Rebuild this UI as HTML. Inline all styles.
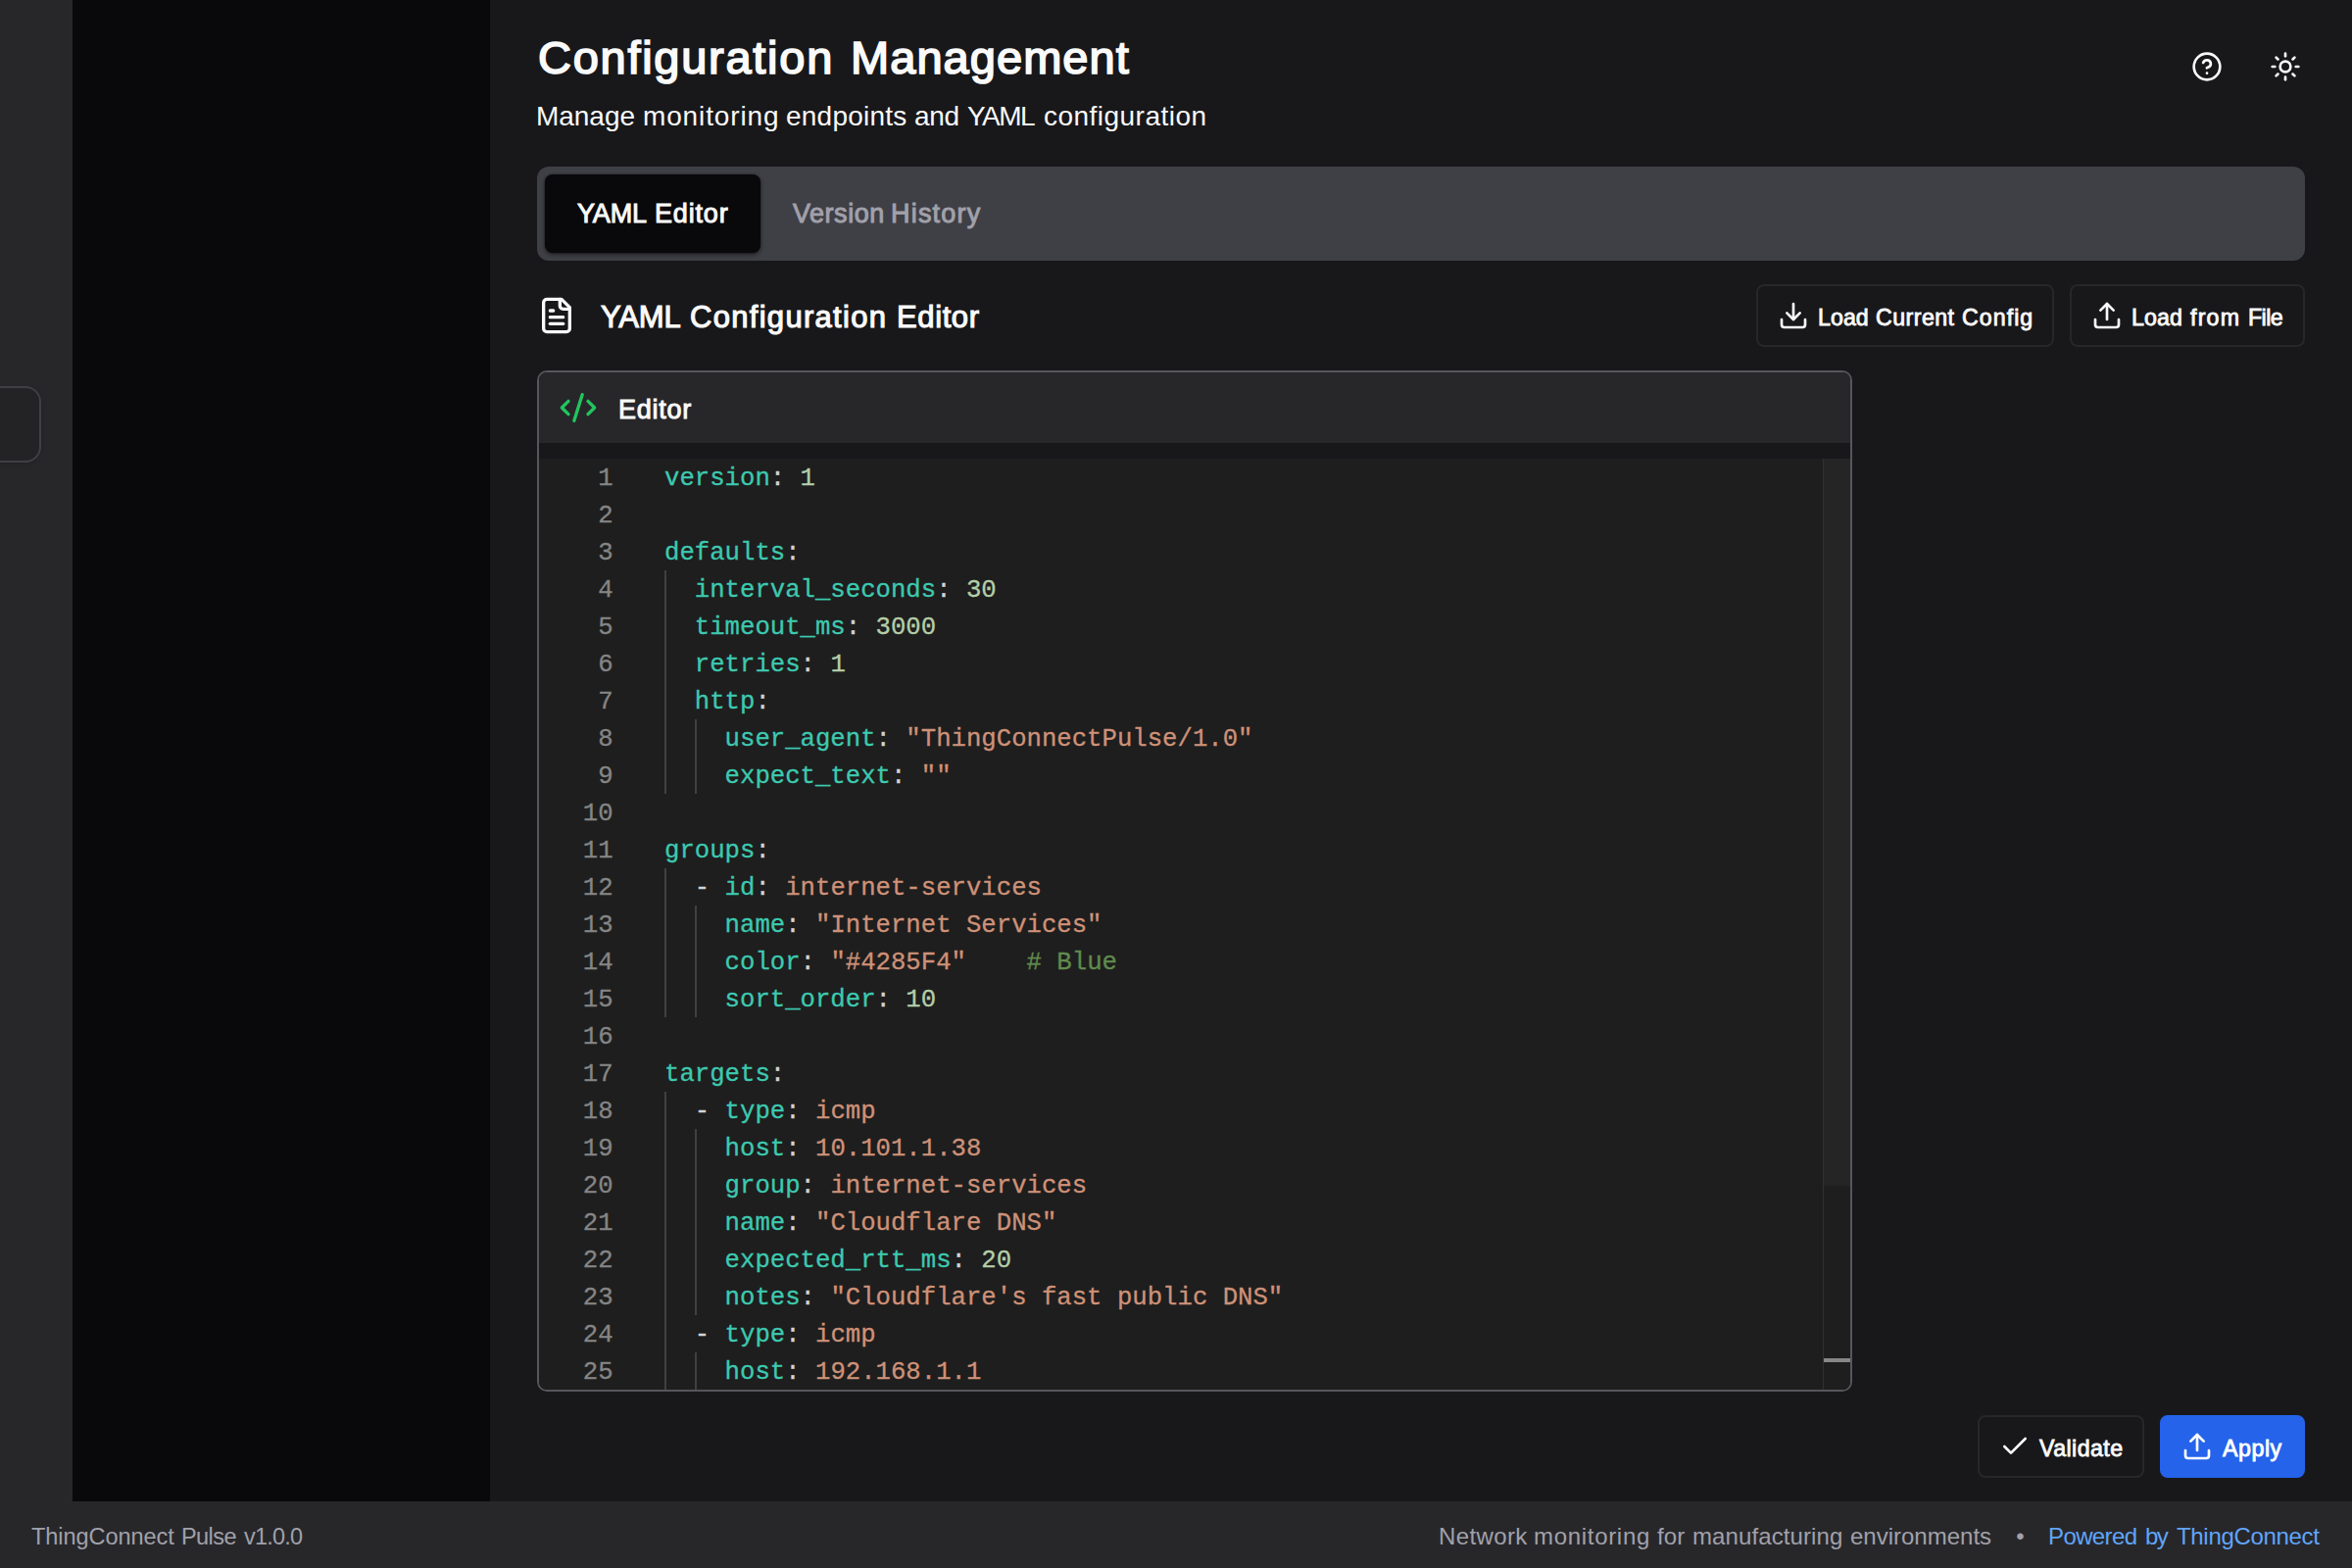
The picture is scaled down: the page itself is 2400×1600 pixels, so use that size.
<!DOCTYPE html>
<html lang="en">
<head>
<meta charset="utf-8">
<title>Configuration Management - ThingConnect Pulse</title>
<style>
*{box-sizing:border-box;margin:0;padding:0}
html,body{width:2400px;height:1600px;overflow:hidden;background:#18181b}
body{position:relative;font-family:"Liberation Sans",sans-serif;color:#fafafa;-webkit-font-smoothing:antialiased}
.abs{position:absolute}
.t{position:absolute;white-space:nowrap;line-height:1}
.w{position:absolute;top:0;white-space:pre}
.sb{-webkit-text-stroke:0.036em currentColor}
svg.ic{position:absolute;fill:none;stroke:currentColor;stroke-linecap:round;stroke-linejoin:round;stroke-width:2}
/* regions */
#strip{left:0;top:0;width:74px;height:1600px;background:#27272a}
#toggle{left:-20px;top:394px;width:62px;height:78px;border:2px solid #3f3f44;border-radius:16px;background:#232326;box-shadow:0 2px 4px rgba(0,0,0,.12)}
#side{left:74px;top:0;width:426px;height:1532px;background:#09090b}
#footer{left:0;top:1532px;width:2400px;height:68px;background:#27272a}
#tabs{left:548px;top:170px;width:1804px;height:96px;border-radius:12px;background:#3f3f46}
#tab1{left:556px;top:178px;width:220px;height:80px;border-radius:8px;background:#09090b;box-shadow:0 2px 4px rgba(0,0,0,.45),0 0 2px rgba(0,0,0,.5)}
.btn{position:absolute;height:64px;border:2px solid #27272a;border-radius:8px}
#panel{left:548px;top:378px;width:1342px;height:1042px;border:2px solid #56565b;border-radius:10px;background:#18181b;overflow:hidden}
#phead{left:0;top:0;width:1338px;height:72px;background:#27272a}
#ed{left:0;top:88px;width:1338px;height:950px;background:#1e1e1e}
#sbar{left:1310px;top:88px;width:28px;height:950px;border-left:1px solid #303031;background:#1e1e1e}
#slider{left:1311px;top:88px;width:27px;height:742px;background:#252526}
#mark{left:1311px;top:1006px;width:27px;height:4px;background:#878787}
/* code */
#code{-webkit-text-stroke:0.3px currentColor;position:absolute;left:0;top:0;width:2400px;font-family:"Liberation Mono",monospace;font-size:25.667px;line-height:38px;white-space:pre}
.cl{position:absolute;left:0;height:38px;width:1860px}
.ln{position:absolute;right:calc(1860px - 625.6px);top:2.3px;color:#858585}
.ct{position:absolute;left:678px;top:2.3px}
.k{color:#3dc9b0}.p{color:#d4d4d4}.n{color:#b5cea8}.s{color:#ce9178}.c{color:#608b4e}
.ig{position:absolute;width:2px;background:#404040}
</style>
</head>
<body>
<div class="abs" id="strip"></div>
<div class="abs" id="toggle"></div>
<div class="abs" id="side"></div>

<!-- header -->
<svg class="ic" id="help" viewBox="0 0 24 24" style="left:2236px;top:52px;width:32px;height:32px"><circle cx="12" cy="12" r="10"/><path d="M9.09 9a3 3 0 0 1 5.83 1c0 2-3 3-3 3"/><path d="M12 17h.01"/></svg>
<svg class="ic" id="sun" viewBox="0 0 24 24" style="left:2316px;top:52px;width:32px;height:32px"><circle cx="12" cy="12" r="4"/><path d="M12 2v2"/><path d="M12 20v2"/><path d="m4.93 4.93 1.41 1.41"/><path d="m17.66 17.66 1.41 1.41"/><path d="M2 12h2"/><path d="M20 12h2"/><path d="m6.34 17.66-1.41 1.41"/><path d="m19.07 4.93-1.41 1.41"/></svg>

<!-- tabs -->
<div class="abs" id="tabs"></div>
<div class="abs" id="tab1"></div>

<!-- section heading -->
<svg class="ic" id="fileic" viewBox="0 0 24 24" style="left:548px;top:302px;width:40px;height:40px"><path d="M15 2H6a2 2 0 0 0-2 2v16a2 2 0 0 0 2 2h12a2 2 0 0 0 2-2V7Z"/><path d="M14 2v4a2 2 0 0 0 2 2h4"/><path d="M10 9H8"/><path d="M16 13H8"/><path d="M16 17H8"/></svg>

<div class="btn" id="b1" style="left:1792px;top:290px;width:304px"></div>
<svg class="ic" viewBox="0 0 24 24" style="left:1814px;top:306px;width:32px;height:32px"><path d="M21 15v4a2 2 0 0 1-2 2H5a2 2 0 0 1-2-2v-4"/><polyline points="7 10 12 15 17 10"/><line x1="12" x2="12" y1="15" y2="3"/></svg>
<div class="btn" id="b2" style="left:2112px;top:290px;width:240px"></div>
<svg class="ic" viewBox="0 0 24 24" style="left:2134px;top:306px;width:32px;height:32px"><path d="M21 15v4a2 2 0 0 1-2 2H5a2 2 0 0 1-2-2v-4"/><polyline points="17 8 12 3 7 8"/><line x1="12" x2="12" y1="3" y2="15"/></svg>

<!-- editor panel -->
<div class="abs" id="panel">
  <div class="abs" id="phead"></div>
  <div class="abs" id="ed"></div>
  <div class="abs" id="sbar"></div>
  <div class="abs" id="slider"></div>
  <div class="abs" id="mark"></div>
</div>
<svg class="ic" id="codeic" viewBox="0 0 24 24" style="left:570px;top:396px;width:40px;height:40px;color:#22c55e"><path d="m18 16 4-4-4-4"/><path d="m6 8-4 4 4 4"/><path d="m14.5 4-5 16"/></svg>

<div id="codeclip" class="abs" style="left:550px;top:468px;width:1310px;height:950px;overflow:hidden">
<div id="code" style="left:-550px;top:-468px">
<div class="ig" style="left:678.0px;top:582px;height:228px"></div>
<div class="ig" style="left:708.8px;top:734px;height:76px"></div>
<div class="ig" style="left:678.0px;top:886px;height:152px"></div>
<div class="ig" style="left:708.8px;top:924px;height:114px"></div>
<div class="ig" style="left:678.0px;top:1114px;height:304px"></div>
<div class="ig" style="left:708.8px;top:1152px;height:190px"></div>
<div class="ig" style="left:708.8px;top:1380px;height:38px"></div>
<div class="cl" style="top:468px"><span class="ln">1</span><span class="ct"><span class="k">version</span><span class="p">: </span><span class="n">1</span></span></div>
<div class="cl" style="top:506px"><span class="ln">2</span><span class="ct"></span></div>
<div class="cl" style="top:544px"><span class="ln">3</span><span class="ct"><span class="k">defaults</span><span class="p">:</span></span></div>
<div class="cl" style="top:582px"><span class="ln">4</span><span class="ct"><span class="p">  </span><span class="k">interval_seconds</span><span class="p">: </span><span class="n">30</span></span></div>
<div class="cl" style="top:620px"><span class="ln">5</span><span class="ct"><span class="p">  </span><span class="k">timeout_ms</span><span class="p">: </span><span class="n">3000</span></span></div>
<div class="cl" style="top:658px"><span class="ln">6</span><span class="ct"><span class="p">  </span><span class="k">retries</span><span class="p">: </span><span class="n">1</span></span></div>
<div class="cl" style="top:696px"><span class="ln">7</span><span class="ct"><span class="p">  </span><span class="k">http</span><span class="p">:</span></span></div>
<div class="cl" style="top:734px"><span class="ln">8</span><span class="ct"><span class="p">    </span><span class="k">user_agent</span><span class="p">: </span><span class="s">"ThingConnectPulse/1.0"</span></span></div>
<div class="cl" style="top:772px"><span class="ln">9</span><span class="ct"><span class="p">    </span><span class="k">expect_text</span><span class="p">: </span><span class="s">""</span></span></div>
<div class="cl" style="top:810px"><span class="ln">10</span><span class="ct"></span></div>
<div class="cl" style="top:848px"><span class="ln">11</span><span class="ct"><span class="k">groups</span><span class="p">:</span></span></div>
<div class="cl" style="top:886px"><span class="ln">12</span><span class="ct"><span class="p">  - </span><span class="k">id</span><span class="p">: </span><span class="s">internet-services</span></span></div>
<div class="cl" style="top:924px"><span class="ln">13</span><span class="ct"><span class="p">    </span><span class="k">name</span><span class="p">: </span><span class="s">"Internet Services"</span></span></div>
<div class="cl" style="top:962px"><span class="ln">14</span><span class="ct"><span class="p">    </span><span class="k">color</span><span class="p">: </span><span class="s">"#4285F4"</span><span class="p">    </span><span class="c"># Blue</span></span></div>
<div class="cl" style="top:1000px"><span class="ln">15</span><span class="ct"><span class="p">    </span><span class="k">sort_order</span><span class="p">: </span><span class="n">10</span></span></div>
<div class="cl" style="top:1038px"><span class="ln">16</span><span class="ct"></span></div>
<div class="cl" style="top:1076px"><span class="ln">17</span><span class="ct"><span class="k">targets</span><span class="p">:</span></span></div>
<div class="cl" style="top:1114px"><span class="ln">18</span><span class="ct"><span class="p">  - </span><span class="k">type</span><span class="p">: </span><span class="s">icmp</span></span></div>
<div class="cl" style="top:1152px"><span class="ln">19</span><span class="ct"><span class="p">    </span><span class="k">host</span><span class="p">: </span><span class="s">10.101.1.38</span></span></div>
<div class="cl" style="top:1190px"><span class="ln">20</span><span class="ct"><span class="p">    </span><span class="k">group</span><span class="p">: </span><span class="s">internet-services</span></span></div>
<div class="cl" style="top:1228px"><span class="ln">21</span><span class="ct"><span class="p">    </span><span class="k">name</span><span class="p">: </span><span class="s">"Cloudflare DNS"</span></span></div>
<div class="cl" style="top:1266px"><span class="ln">22</span><span class="ct"><span class="p">    </span><span class="k">expected_rtt_ms</span><span class="p">: </span><span class="n">20</span></span></div>
<div class="cl" style="top:1304px"><span class="ln">23</span><span class="ct"><span class="p">    </span><span class="k">notes</span><span class="p">: </span><span class="s">"Cloudflare's fast public DNS"</span></span></div>
<div class="cl" style="top:1342px"><span class="ln">24</span><span class="ct"><span class="p">  - </span><span class="k">type</span><span class="p">: </span><span class="s">icmp</span></span></div>
<div class="cl" style="top:1380px"><span class="ln">25</span><span class="ct"><span class="p">    </span><span class="k">host</span><span class="p">: </span><span class="s">192.168.1.1</span></span></div>
</div>
</div>

<!-- bottom buttons -->
<div class="btn" id="b3" style="left:2018px;top:1444px;width:170px"></div>
<svg class="ic" viewBox="0 0 24 24" style="left:2040px;top:1460px;width:32px;height:32px"><path d="M20 6 9 17l-5-5"/></svg>
<div class="btn" id="b4" style="left:2204px;top:1444px;width:148px;background:#2563eb;border-color:#2563eb"></div>
<svg class="ic" viewBox="0 0 24 24" style="left:2226px;top:1460px;width:32px;height:32px;color:#fff"><path d="M21 15v4a2 2 0 0 1-2 2H5a2 2 0 0 1-2-2v-4"/><polyline points="17 8 12 3 7 8"/><line x1="12" x2="12" y1="3" y2="15"/></svg>

<!-- footer -->
<div class="abs" id="footer"></div>
<div class="t" id="f3" style="left:2057.2px;top:1556px;font-size:24px;color:#a1a1aa">•</div>
<!-- texts -->
<div class="t sb" id="title" style="left:0;top:35.35px;font-size:47px"><span class="w" id="title_0" style="left:549.00px;letter-spacing:1.725px">Configuration</span> <span class="w" id="title_1" style="left:868.00px;letter-spacing:1.050px">Management</span></div>
<div class="t" id="sub" style="left:0;top:105px;font-size:28px"><span class="w" id="sub_0" style="left:547.00px;letter-spacing:-0.036px">Manage</span> <span class="w" id="sub_1" style="left:656.00px;letter-spacing:0.860px">monitoring</span> <span class="w" id="sub_2" style="left:802.00px;letter-spacing:0.225px">endpoints</span> <span class="w" id="sub_3" style="left:933.00px;letter-spacing:-0.270px">and</span> <span class="w" id="sub_4" style="left:987.00px;letter-spacing:-1.530px">YAML</span> <span class="w" id="sub_5" style="left:1065.00px;letter-spacing:0.473px">configuration</span></div>
<div class="t sb" id="tabt1" style="left:0;top:204.85px;font-size:27px"><span class="w" id="tabt1_0" style="left:589.00px;letter-spacing:-0.180px">YAML</span> <span class="w" id="tabt1_1" style="left:668.00px;letter-spacing:0.828px">Editor</span></div>
<div class="t sb" id="tabt2" style="left:0;top:204.85px;font-size:27px;color:#a1a1aa"><span class="w" id="tabt2_0" style="left:809.00px;letter-spacing:0.525px">Version</span> <span class="w" id="tabt2_1" style="left:909.00px;letter-spacing:1.200px">History</span></div>
<div class="t sb" id="h2" style="left:0;top:308.1px;font-size:31px"><span class="w" id="h2_0" style="left:613.00px;letter-spacing:-0.120px">YAML</span> <span class="w" id="h2_1" style="left:704.00px;letter-spacing:1.297px">Configuration</span> <span class="w" id="h2_2" style="left:915.00px;letter-spacing:0.612px">Editor</span></div>
<div class="t sb" id="bt1" style="left:0;top:312.7px;font-size:23.2px"><span class="w" id="bt1_0" style="left:1855.00px;letter-spacing:0.060px">Load</span> <span class="w" id="bt1_1" style="left:1914.00px;letter-spacing:0.450px">Current</span> <span class="w" id="bt1_2" style="left:2002.00px;letter-spacing:1.044px">Config</span></div>
<div class="t sb" id="bt2" style="left:0;top:312.7px;font-size:23.2px"><span class="w" id="bt2_0" style="left:2175.00px;letter-spacing:0.120px">Load</span> <span class="w" id="bt2_1" style="left:2235.00px;letter-spacing:1.200px">from</span> <span class="w" id="bt2_2" style="left:2294.00px;letter-spacing:-0.540px">File</span></div>
<div class="t sb" id="edl" style="left:0;top:405.35px;font-size:27px"><span class="w" id="edl_0" style="left:631.00px;letter-spacing:0.720px">Editor</span></div>
<div class="t sb" id="bt3" style="left:0;top:1466.9px;font-size:23.2px"><span class="w" id="bt3_0" style="left:2081.00px;letter-spacing:0.437px">Validate</span></div>
<div class="t sb" id="bt4" style="left:0;top:1466.9px;font-size:23.2px;color:#fff"><span class="w" id="bt4_0" style="left:2268.00px;letter-spacing:0.540px">Apply</span></div>
<div class="t" id="f1" style="left:0;top:1556.6px;font-size:23.5px;color:#a1a1aa"><span class="w" id="f1_0" style="left:32.00px;letter-spacing:-0.041px">ThingConnect</span> <span class="w" id="f1_1" style="left:185.00px;letter-spacing:-0.562px">Pulse</span> <span class="w" id="f1_2" style="left:249.00px;letter-spacing:-0.810px">v1.0.0</span></div>
<div class="t" id="f2" style="left:0;top:1556px;font-size:24px;color:#a1a1aa"><span class="w" id="f2_0" style="left:1468.00px;letter-spacing:0.375px">Network</span> <span class="w" id="f2_1" style="left:1565.00px;letter-spacing:0.690px">monitoring</span> <span class="w" id="f2_2" style="left:1691.00px;letter-spacing:0.090px">for</span> <span class="w" id="f2_3" style="left:1727.00px;letter-spacing:0.097px">manufacturing</span> <span class="w" id="f2_4" style="left:1888.00px;letter-spacing:0.000px">environments</span></div>
<div class="t" id="f4" style="left:0;top:1556px;font-size:24px;color:#60a5fa"><span class="w" id="f4_0" style="left:2090.00px;letter-spacing:-0.615px">Powered</span> <span class="w" id="f4_1" style="left:2189.00px;letter-spacing:-1.530px">by</span> <span class="w" id="f4_2" style="left:2221.00px;letter-spacing:-0.319px">ThingConnect</span></div>
</body>
</html>
